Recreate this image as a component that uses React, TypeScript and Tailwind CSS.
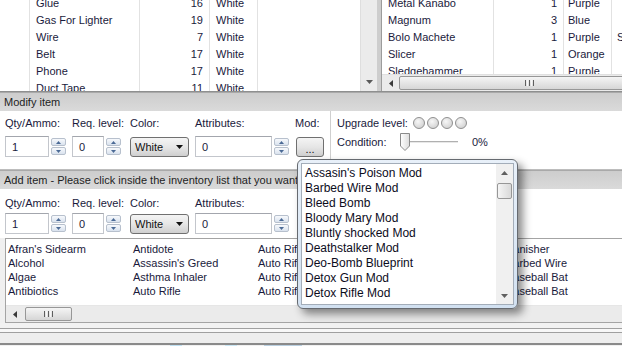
import React from "react";

type Row = { name: string; qty: number; color: string; extra?: string };

const leftRows: Row[] = [
  { name: "Glue", qty: 16, color: "White" },
  { name: "Gas For Lighter", qty: 19, color: "White" },
  { name: "Wire", qty: 7, color: "White" },
  { name: "Belt", qty: 17, color: "White" },
  { name: "Phone", qty: 17, color: "White" },
  { name: "Duct Tape", qty: 11, color: "White" },
];

const rightRows: Row[] = [
  { name: "Metal Kanabo", qty: 1, color: "Purple" },
  { name: "Magnum", qty: 3, color: "Blue" },
  { name: "Bolo Machete", qty: 1, color: "Purple", extra: "Shock" },
  { name: "Slicer", qty: 1, color: "Orange" },
  { name: "Sledgehammer", qty: 1, color: "Purple" },
];

const mods = [
  "Assasin's Poison Mod",
  "Barbed Wire Mod",
  "Bleed Bomb",
  "Bloody Mary Mod",
  "Bluntly shocked Mod",
  "Deathstalker Mod",
  "Deo-Bomb Blueprint",
  "Detox Gun Mod",
  "Detox Rifle Mod",
];

// the fourth column sits under the mod popup, so it is left empty
const addColumns = [
  { w: "w-[125px]", items: ["Afran's Sidearm", "Alcohol", "Algae", "Antibiotics"] },
  { w: "w-[125px]", items: ["Antidote", "Assassin's Greed", "Asthma Inhaler", "Auto Rifle"] },
  { w: "w-[125px]", items: ["Auto Rifle", "Auto Rifle", "Auto Rifle", "Auto Rifle"] },
  { w: "w-[123px]", items: [] as string[] },
  { w: "w-[125px]", items: ["Banisher", "Barbed Wire", "Baseball Bat", "Baseball Bat"] },
];

function Tri({ dir, w, h }: { dir: "up" | "down" | "left"; w: number; h: number }) {
  const pts =
    dir === "up" ? `0,${h} ${w / 2},0 ${w},${h}` : dir === "down" ? `0,0 ${w},0 ${w / 2},${h}` : `${w},0 ${w},${h} 0,${h / 2}`;
  return (
    <svg width={w} height={h} viewBox={`0 0 ${w} ${h}`}>
      <polygon points={pts} fill="currentColor" />
    </svg>
  );
}

function Grip() {
  return (
    <div className="flex gap-[1px]">
      <div className="w-[1px] h-[6px] bg-[#5f5f5f]" />
      <div className="w-[1px] h-[6px] bg-[#f8f8f8]" />
      <div className="w-[1px] h-[6px] bg-[#5f5f5f]" />
      <div className="w-[1px] h-[6px] bg-[#f8f8f8]" />
      <div className="w-[1px] h-[6px] bg-[#5f5f5f]" />
    </div>
  );
}

function Spin() {
  return (
    <div className="flex flex-col gap-[1px] w-[15px] pt-[2px]">
      <div className="h-[8px] flex items-center justify-center rounded-[2px] border border-[#b7c0cd] bg-linear-to-b from-[#f7f9fc] to-[#d9e2ee] text-[#4b6a96]">
        <Tri dir="up" w={5} h={3} />
      </div>
      <div className="h-[8px] flex items-center justify-center rounded-[2px] border border-[#b7c0cd] bg-linear-to-b from-[#f7f9fc] to-[#d9e2ee] text-[#4b6a96]">
        <Tri dir="down" w={5} h={3} />
      </div>
    </div>
  );
}

function TextBox({ w, value }: { w: string; value: string }) {
  return (
    <div className={`${w} h-[21px] bg-white border border-[#c3c6cc] border-t-[#a3a6ad] flex items-center pl-[6px]`}>
      {value}
    </div>
  );
}

function Group({ w, label, gap, children }: { w: string; label: string; gap: string; children: React.ReactNode }) {
  return (
    <div className={`${w} flex flex-col shrink-0`}>
      <div className="h-[14px] whitespace-nowrap">{label}</div>
      <div className={`${gap} flex gap-[2px]`}>{children}</div>
    </div>
  );
}

function FieldRow({ gap, mod }: { gap: string; mod?: boolean }) {
  return (
    <div className="flex w-[330px] pl-[5px]">
      <Group w="w-[67px]" label="Qty/Ammo:" gap={gap}>
        <TextBox w="w-[44px]" value="1" />
        <Spin />
      </Group>
      <Group w="w-[58px]" label="Req. level:" gap={gap}>
        <TextBox w="w-[32px]" value="0" />
        <Spin />
      </Group>
      <Group w="w-[65px]" label="Color:" gap={gap}>
        <div className="w-[59px] h-[20px] mt-[1px] rounded-[3px] border border-[#707070] bg-linear-to-b from-[#f4f4f4] via-[#e6e6e6] to-[#cfcfcf] flex items-center pl-[4px] pr-[5px] justify-between text-[#111]">
          <span>White</span>
          <Tri dir="down" w={7} h={4} />
        </div>
      </Group>
      <Group w="w-[100px]" label="Attributes:" gap={gap}>
        <TextBox w="w-[77px]" value="0" />
        <Spin />
      </Group>
      {mod && (
        <Group w="w-[35px]" label="Mod:" gap={gap}>
          <div className="ml-[1px] w-[28px] h-[20px] mt-[1px] rounded-[3px] border border-[#707070] bg-linear-to-b from-[#f4f4f4] via-[#e6e6e6] to-[#cfcfcf] flex items-end justify-center pb-[2px] leading-[10px] text-[#111]">
            ...
          </div>
        </Group>
      )}
    </div>
  );
}

function Header({ text }: { text: string }) {
  return (
    <div className="h-[19px] shrink-0 border-t border-[#a9a9a9] bg-linear-to-b from-[#cdcdcd] to-[#dadada] flex items-center pl-[4px] whitespace-nowrap overflow-hidden text-[#1e1e1e]">
      {text}
    </div>
  );
}

export default function App() {
  return (
    <div className="w-[622px] h-[346px] overflow-hidden relative flex flex-col bg-[#f0f0f0] text-[11px] leading-[14px] text-[#1a1a3c] font-['Liberation_Sans',Arial,sans-serif]">
      {/* inventory lists */}
      <div className="flex h-[92px] shrink-0 border-b border-[#8e8f8f] bg-white">
        <div className="w-[360px] overflow-hidden">
          <div className="-mt-[6px]">
            {leftRows.map((r) => (
              <div key={r.name} className="flex h-[17px]">
                <div className="w-[30px] border-r border-[#e2e2e2]" />
                <div className="w-[110px] border-r border-[#e2e2e2] pl-[6px] flex items-center">{r.name}</div>
                <div className="w-[70px] border-r border-[#e2e2e2] pr-[6px] flex items-center justify-end">{r.qty}</div>
                <div className="w-[48px] border-r border-[#e2e2e2] pl-[6px] flex items-center">{r.color}</div>
              </div>
            ))}
          </div>
        </div>
        <div className="w-[17px] bg-[#ebebeb] border-l border-[#dedede] flex flex-col justify-end items-center pb-[7px] text-[#5a5a5a]">
          <Tri dir="down" w={7} h={4} />
        </div>
        <div className="w-[5px] bg-[#cdcdcd] border-r border-[#9c9c9c]" />
        <div className="flex-1 flex flex-col overflow-hidden">
          <div className="h-[75px] overflow-hidden">
            <div className="-mt-[6px]">
              {rightRows.map((r) => (
                <div key={r.name} className="flex h-[17px] whitespace-nowrap">
                  <div className="w-[112px] shrink-0 border-r border-[#e2e2e2] pl-[6px] flex items-center">{r.name}</div>
                  <div className="w-[70px] shrink-0 border-r border-[#e2e2e2] pr-[6px] flex items-center justify-end">{r.qty}</div>
                  <div className="w-[48px] shrink-0 border-r border-[#e2e2e2] pl-[4px] flex items-center">{r.color}</div>
                  <div className="pl-[5px] flex items-center">{r.extra}</div>
                </div>
              ))}
            </div>
          </div>
          <div className="h-[17px] flex bg-[#ebebeb] border-t border-[#e0e0e0] overflow-hidden">
            <div className="w-[17px] shrink-0 flex items-center justify-center text-[#3a3a3a]">
              <Tri dir="left" w={4} h={7} />
            </div>
            <div className="w-[260px] shrink-0 my-[1px] rounded-[2px] border border-[#979797] bg-linear-to-b from-[#f5f5f5] to-[#d6d6d6] flex items-center justify-center">
              <Grip />
            </div>
          </div>
        </div>
      </div>

      {/* modify item */}
      <Header text="Modify item" />
      <div className="h-[59px] shrink-0 flex bg-white border-b border-[#bdbdbd]">
        <div className="pt-[5px]">
          <FieldRow gap="mt-[6px]" mod />
        </div>
        <div className="w-[1px] bg-[#cfcfcf]" />
        <div className="pl-[6px] pt-[5px] flex flex-col">
          <div className="h-[14px] flex items-center">
            <span>Upgrade level:</span>
            <div className="ml-[5px] flex gap-[2px]">
              {[0, 1, 2, 3].map((i) => (
                <div
                  key={i}
                  className="w-[12px] h-[12px] rounded-full border border-[#8f8f8f] bg-[radial-gradient(circle_at_40%_35%,#f7f7f7,#c9c9c9)]"
                />
              ))}
            </div>
          </div>
          <div className="mt-[3px] h-[18px] flex items-center">
            <span className="w-[63px]">Condition:</span>
            <svg width="10" height="18" viewBox="0 0 10 18">
              <defs>
                <linearGradient id="thumb" x1="0" y1="0" x2="1" y2="0">
                  <stop offset="0" stopColor="#ffffff" />
                  <stop offset="1" stopColor="#dcdcdc" />
                </linearGradient>
              </defs>
              <polygon points="0.5,0.5 9.5,0.5 9.5,13 5,17.5 0.5,13" fill="url(#thumb)" stroke="#8a8a8a" />
            </svg>
            <div className="w-[48px] h-[2px] border-t border-[#b0b0b0] bg-white border-b border-b-[#e8e8e8]" />
            <span className="ml-[14px]">0%</span>
          </div>
        </div>
      </div>

      {/* add item */}
      <Header text="Add item - Please click inside the inventory list that you want" />
      <div className="h-[49px] shrink-0 bg-white pt-[7px]">
        <FieldRow gap="mt-[3px]" />
      </div>

      <div className="h-[85px] shrink-0 flex flex-col bg-white border-t border-[#a4a4a4] ml-[5px] border-l border-b border-l-[#a4a4a4] border-b-[#a4a4a4]">
        <div className="flex-1 flex pt-[3px] pl-[2px] whitespace-nowrap overflow-hidden">
          {addColumns.map((c, i) => (
            <div key={i} className={`${c.w} shrink-0 flex flex-col`}>
              {c.items.map((it, j) => (
                <div key={j} className="h-[14px]">
                  {it}
                </div>
              ))}
            </div>
          ))}
        </div>
        <div className="h-[17px] flex bg-[#ebebeb] border-t border-[#e6e6e6]">
          <div className="w-[17px] shrink-0 flex items-center justify-center text-[#3a3a3a]">
            <Tri dir="left" w={4} h={7} />
          </div>
          <div className="w-[47px] shrink-0 ml-[2px] my-[1px] rounded-[2px] border border-[#979797] bg-linear-to-b from-[#f5f5f5] to-[#d6d6d6] flex items-center justify-center">
            <Grip />
          </div>
        </div>
      </div>

      {/* status strip */}
      <div className="h-[5px] shrink-0 bg-[#f2f2f2]" />
      <div className="h-[5px] shrink-0 border-y border-[#a0a0a0] bg-[#f8f8f8]" />
      <div className="h-[10px] shrink-0 bg-[#eeeeee]" />
      <div className="h-[2px] shrink-0 bg-[#8a8a8a]" />
      <div className="flex-1 flex bg-[#f0f0f0]">
        <div className="w-[170px]" />
        <div className="w-[12px] bg-[#bfe0f2]" />
        <div className="w-[43px]" />
        <div className="w-[12px] bg-[#c9e6f4]" />
        <div className="w-[27px]" />
        <div className="w-[38px] bg-[#b9cfe0]" />
      </div>

      {/* mod dropdown popup */}
      <div className="absolute left-[297px] top-[159px] w-[221px] h-[150px] rounded-[6px] border border-[#666a70] bg-linear-to-b from-[#e8f0f9] to-[#d2e1f1] p-[3px] shadow-[5px_5px_8px_rgba(0,0,0,0.45)]">
        <div className="w-full h-full bg-white border border-[#a3adb9] flex text-[12px] leading-[15px] text-[#0c0c1c]">
          <div className="flex-1 pt-[2px] pl-[3px] whitespace-nowrap overflow-hidden">
            {mods.map((m) => (
              <div key={m} className="h-[15px]">
                {m}
              </div>
            ))}
          </div>
          <div className="w-[17px] bg-[#f0f0f0] flex flex-col items-center text-[#606060]">
            <div className="h-[17px] flex items-center justify-center">
              <Tri dir="up" w={7} h={4} />
            </div>
            <div className="w-[15px] h-[16px] mt-[2px] rounded-[2px] border border-[#979797] bg-linear-to-r from-[#f5f5f5] to-[#d9d9d9]" />
            <div className="flex-1" />
            <div className="h-[17px] flex items-center justify-center">
              <Tri dir="down" w={7} h={4} />
            </div>
          </div>
        </div>
      </div>
    </div>
  );
}
